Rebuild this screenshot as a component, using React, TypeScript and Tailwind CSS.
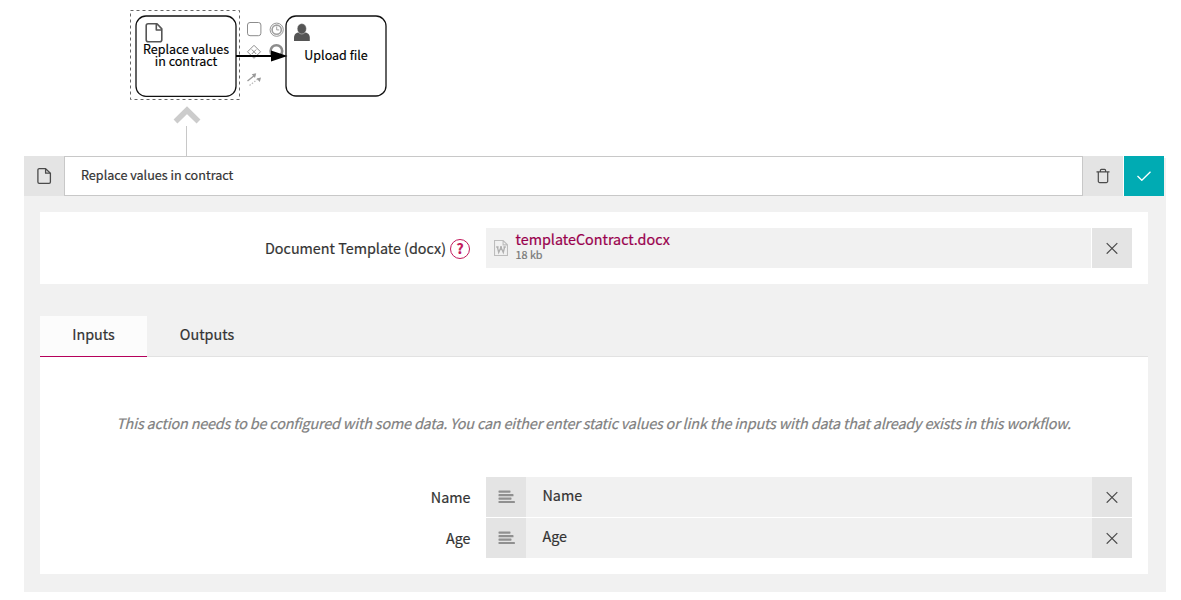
import type { ReactNode } from 'react';

function FileIcon() {
  return (
    <svg width="16" height="16" viewBox="0 0 16 16" fill="none" stroke="currentColor" strokeWidth="1.3" strokeLinejoin="round">
      <path d="M3.2.7h6.4l4.8 4.5v8.8a1.3 1.3 0 0 1-1.3 1.3H3.2A1.3 1.3 0 0 1 1.9 14V2A1.3 1.3 0 0 1 3.2.7Z" />
      <path d="M9.6.9v4.3h4.6" />
    </svg>
  );
}

function TrashIcon() {
  return (
    <svg width="16" height="16" viewBox="0 0 16 16" fill="none" stroke="#4a4a4a" strokeWidth="1.2">
      <path d="M1.5 3.8h13M5.4 3.6V2.4a1 1 0 0 1 1-1h3.2a1 1 0 0 1 1 1v1.2M3.3 4v9.2a1.4 1.4 0 0 0 1.4 1.4h6.6a1.4 1.4 0 0 0 1.4-1.4V4" />
    </svg>
  );
}

function CloseIcon() {
  return (
    <svg width="12" height="12" viewBox="0 0 12 12" fill="none" stroke="#4a4a4a" strokeWidth="1.2">
      <path d="M.7 1.1 11.3 11.7M11.3 1.1.7 11.7" />
    </svg>
  );
}

function LinesIcon() {
  return (
    <svg width="17" height="14" viewBox="0 0 17 14" fill="#909090">
      <rect x=".5" y="0.5" width="12" height="2.2" rx=".6" />
      <rect x=".5" y="4.1" width="15" height="2.2" rx=".6" />
      <rect x=".5" y="7.5" width="13" height="2.2" rx=".6" />
      <rect x=".5" y="10.9" width="16.4" height="2.2" rx=".6" />
    </svg>
  );
}

function WordIcon() {
  return (
    <svg width="14" height="16" viewBox="0 0 14 16" fill="none" stroke="#bdbdbd" strokeWidth="1.1">
      <path d="M.5.5h8.6l4.4 4.4v10.6H.5zM9.1.5v4.4h4.4" />
      <path d="M2.2 7h2.4M6 7h2M9.4 7h2.4M3.4 7l1.3 5.500L7 7.400 9.300 12.500 10.600 7" stroke="#b0b0b0" strokeWidth="1.3" />
    </svg>
  );
}

function Diagram() {
  return (
    <svg width="1181" height="156" viewBox="0 0 1181 156" className="block" fontFamily="'Noto Sans CJK JP', sans-serif" fontSize="12.5">
      <rect x="130.5" y="10.5" width="109" height="89" fill="none" stroke="#666" strokeDasharray="3 3" />
      <rect x="136" y="16" width="100" height="80.3" rx="10" fill="#fff" stroke="#111" strokeWidth="1.3" />
      <path d="M148.2 23.7h8.8l4.8 5.2v10.8a2 2 0 0 1-2 2h-11.6a2 2 0 0 1-2-2v-14a2 2 0 0 1 2-2Z M156.3 24v6h5.4" fill="none" stroke="#555" strokeWidth="1.6" strokeLinejoin="round" />
      <g fill="#000" stroke="#000" strokeWidth=".15">
        <text x="186" y="54" textAnchor="middle">
          Replace values
          <tspan x="186" dy="12">in contract</tspan>
        </text>
      </g>

      <g fill="none" stroke="#8c8c8c">
        <rect x="247.5" y="22.5" width="13.4" height="13.2" rx="2.5" />
        <circle cx="276.7" cy="29.7" r="6.6" strokeWidth=".9" />
        <circle cx="276.7" cy="29.7" r="4.6" strokeWidth="1.6" stroke="#a0a0a0" />
        <path d="M276.7 26.5v3.4h2.5" strokeWidth=".8" />
        <circle cx="276.4" cy="51" r="5.8" strokeWidth="2.6" />
        <path d="m254 45.3 6.5 6.5-6.5 6.5-6.5-6.5ZM251.8 49.5l4.4 4.5M256.2 49.5l-4.4 4.5" strokeWidth="1" />
        <path d="m247.5 81 7.5-6" stroke="#999" strokeWidth="1.4" />
        <path d="m249.5 85.5 9-7" stroke="#bbb" strokeWidth="1.3" strokeDasharray="1.5 1.5" />
      </g>
      <path d="m256.2 73.3-4.4 1 3.2 3.8ZM261 77.5l-4.4 1 3.2 3.5Z" fill="#999" />

      <rect x="286" y="16" width="100" height="80" rx="10" fill="#fff" stroke="#111" strokeWidth="1.3" />
      <path d="M294 41v-3.2c0-3.5 2.4-5.2 5-5.2h5.5c2.8 0 5.3 1.9 5.3 5.2V41Z" fill="#555" />
      <ellipse cx="301.8" cy="28.8" rx="4.6" ry="5.2" fill="#555" stroke="#fff" strokeWidth=".4" />
      <text x="336" y="60" textAnchor="middle" stroke="#000" strokeWidth=".15">Upload file</text>
      <path d="M236 56h38" stroke="#000" strokeWidth="2" />
      <path d="M271 50.5 287.5 56 271 61.5Z" fill="#000" />

      <path d="m175.5 121.5 11.5-11.3L198.500 121.500" fill="none" stroke="#ccc" strokeWidth="5.5" />
      <path d="M186.5 126v30" stroke="#c8c8c8" />
    </svg>
  );
}

function IconButton({ children }: { children: ReactNode }) {
  return <button className="flex h-10 w-10 shrink-0 items-center justify-center bg-[#e4e4e4]">{children}</button>;
}

function InputRow({ label }: { label: string }) {
  return (
    <div className="flex h-10">
      <div className="w-[430.5px] pt-[9px] text-right leading-[22px]">{label}</div>
      <div className="ml-[15.5px] flex flex-1 bg-[#f1f1f1]">
        <IconButton><LinesIcon /></IconButton>
        <div className="flex-1 pl-[16.5px] pt-[7px] leading-[22px]">{label}</div>
        <IconButton><CloseIcon /></IconButton>
      </div>
    </div>
  );
}

export default function App() {
  return (
    <div className="h-[600px] w-[1181px] overflow-hidden bg-white font-['Noto_Sans_CJK_JP','Noto_Sans',sans-serif] text-[14.35px] text-[#333]">
      <Diagram />
      <main className="ml-6 h-[436px] w-[1142px] bg-[#f1f1f1] [-webkit-text-stroke:0.2px]">
        <header className="flex h-10 bg-white">
          <div className="flex w-10 items-center justify-center bg-[#e4e4e4] text-[#4a4a4a]"><FileIcon /></div>
          <div className="w-[1019px] border border-[#c8c8c8] bg-white pl-4 text-[12.6px] leading-[35px]">Replace values in contract</div>
          <IconButton><TrashIcon /></IconButton>
          <button className="ml-px flex w-10 items-center justify-center bg-[#00abb3]">
            <svg width="14" height="10" viewBox="0 0 14 10" fill="none" stroke="#fff" strokeWidth="1.3"><path d="m.5 5 4.3 4.3L13.5.7" /></svg>
          </button>
          <div className="mt-0.5 flex-1 bg-[#f1f1f1]" />
        </header>

        <section className="ml-4 mt-4 flex h-[72px] w-[1108px] bg-white py-4 pr-4">
          <div className="flex w-[430px] items-center justify-end gap-1">
            <span>Document Template (docx)</span>
            <span className="mt-0.5 flex size-5 items-center justify-center rounded-full border border-[#c2185b] pb-0.5 text-[14px] font-bold leading-none text-[#c2185b]">?</span>
          </div>
          <div className="ml-4 flex flex-1 bg-[#f1f1f1]">
            <div className="flex flex-1 border-r border-white pl-2">
              <div className="pt-3"><WordIcon /></div>
              <div className="ml-[7.5px] pt-[2px]">
                <div className="h-[18px] leading-[18px] text-[#99004d]">templateContract.docx</div>
                <div className="text-[10.8px] leading-[13px] text-[#777]">18 kb</div>
              </div>
            </div>
            <IconButton><CloseIcon /></IconButton>
          </div>
        </section>

        <nav className="ml-4 mt-8 flex h-[41px] w-[1108px] border-b border-[#e2e2e2]">
          <div className="h-[41px] w-[107px] border-b border-[#b5005b] bg-[#fcfcfc] text-center leading-[36px]">Inputs</div>
          <div className="w-[120px] text-center leading-[36px]">Outputs</div>
        </nav>
        <section className="ml-4 flex h-[217px] w-[1108px] flex-col bg-white pr-4">
          <p className="mt-[54px] h-[66px] whitespace-nowrap pl-[15px] text-center italic leading-[24px] tracking-[-0.16px] text-[#808080]">
            This action needs to be configured with some data. You can either enter static values or link the inputs with data that already exists in this workflow.
          </p>
          <div className="flex flex-col gap-px">
            <InputRow label="Name" />
            <InputRow label="Age" />
          </div>
        </section>
      </main>
    </div>
  );
}
